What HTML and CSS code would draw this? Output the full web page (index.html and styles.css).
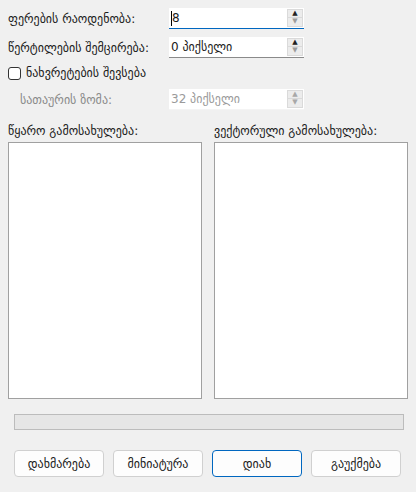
FILE: index.html
```html
<!DOCTYPE html>
<html>
<head>
<meta charset="utf-8">
<link rel="stylesheet" href="styles.css">
</head>
<body>
<div class="dialog">
  <div class="form-row first">
    <span class="label">ფერების რაოდენობა:</span>
    <div class="spin focused">
      <span class="value"><span class="caret"></span>8</span>
      <div class="arrows">
        <span class="arrow up">▲</span>
        <span class="arrow down dim">▼</span>
      </div>
    </div>
  </div>
  <div class="form-row">
    <span class="label">წერტილების შემცირება:</span>
    <div class="spin">
      <span class="value">0 პიქსელი</span>
      <div class="arrows">
        <span class="arrow up">▲</span>
        <span class="arrow down dim">▼</span>
      </div>
    </div>
  </div>
  <label class="check-row">
    <span class="checkbox"></span>
    <span class="label">ნახვრეტების შევსება</span>
  </label>
  <div class="form-row disabled">
    <span class="label indent">სათაურის ზომა:</span>
    <div class="spin">
      <span class="value">32 პიქსელი</span>
      <div class="arrows">
        <span class="arrow up dim">▲</span>
        <span class="arrow down dim">▼</span>
      </div>
    </div>
  </div>
  <div class="images">
    <div class="image-col">
      <span class="label">წყარო გამოსახულება:</span>
      <div class="image-box"></div>
    </div>
    <div class="image-col">
      <span class="label">ვექტორული გამოსახულება:</span>
      <div class="image-box"></div>
    </div>
  </div>
  <div class="progress"></div>
  <div class="buttons">
    <button class="btn">დახმარება</button>
    <button class="btn">მინიატურა</button>
    <button class="btn default">დიახ</button>
    <button class="btn">გაუქმება</button>
  </div>
</div>
</body>
</html>
```
FILE: styles.css
```css
html, body {
  margin: 0;
  padding: 0;
  background: #f0f0f0;
}
body {
  font-family: "DejaVu Sans", "Noto Sans", sans-serif;
  font-size: 12px;
  color: #1a1a1a;
}
.dialog {
  width: 416px;
  height: 492px;
  box-sizing: border-box;
  padding: 8px 8px 0 8px;
  display: flex;
  flex-direction: column;
}
.form-row {
  display: flex;
  align-items: center;
  height: 21px;
  margin-top: 8px;
}
.form-row.first {
  margin-top: 0;
}
.form-row .label {
  width: 161px;
  flex: none;
}
.label.indent {
  padding-left: 12px;
  box-sizing: border-box;
}
.disabled .label {
  color: #8a8a8a;
}
.spin {
  width: 135px;
  height: 21px;
  box-sizing: border-box;
  background: #fff;
  border-bottom: 1px solid #8a8a8a;
  display: flex;
  align-items: center;
  padding-left: 2px;
  position: relative;
}
.spin.focused {
  border-bottom: 1px solid #0067c0;
}
.disabled .spin {
  border-bottom: 1px solid #f4f4f4;
  color: #9a9a9a;
}
.spin .value {
  flex: 1;
  display: flex;
  align-items: center;
}
.caret {
  width: 1px;
  height: 15px;
  background: #000;
}
.arrows {
  width: 16px;
  display: flex;
  flex-direction: column;
  margin-right: 1px;
  align-self: flex-start;
  margin-top: 1px;
}
.arrow {
  height: 9px;
  box-sizing: border-box;
  background: #ececec;
  border: 1px solid #dadada;
  font-size: 7px;
  line-height: 7px;
  text-align: center;
  color: #222;
}
.arrow.down {
  border-top: none;
}
.arrow.dim {
  color: #9c9c9c;
}
.disabled .arrow {
  color: #a8a8a8;
}
.check-row {
  display: flex;
  align-items: center;
  height: 16px;
  margin-top: 7px;
}
.checkbox {
  width: 13px;
  height: 13px;
  box-sizing: border-box;
  border: 1px solid #333;
  border-radius: 3px;
  background: #fff;
  margin-right: 5px;
}
.images {
  display: flex;
  gap: 12px;
  margin-top: 14px;
}
.image-col {
  flex: 1;
  display: flex;
  flex-direction: column;
}
.image-col .label {
  height: 14px;
  line-height: 14px;
  margin-bottom: 4px;
}
.image-box {
  height: 257px;
  box-sizing: border-box;
  background: #fff;
  border: 1px solid #a0a0a0;
}
.progress {
  margin: 15px 4px 0 6px;
  height: 16px;
  box-sizing: border-box;
  background: #e6e6e6;
  border: 1px solid #bcbcbc;
}
.buttons {
  display: flex;
  gap: 9px;
  margin: 20px 0 0 6px;
}
.btn {
  width: 90px;
  height: 27px;
  box-sizing: border-box;
  background: #fdfdfd;
  border: 1px solid #d0d0d0;
  border-radius: 4px;
  font-family: inherit;
  font-size: 12px;
  color: #1a1a1a;
  padding: 0;
}
.btn.default {
  border: 1px solid #0067c0;
}
```
